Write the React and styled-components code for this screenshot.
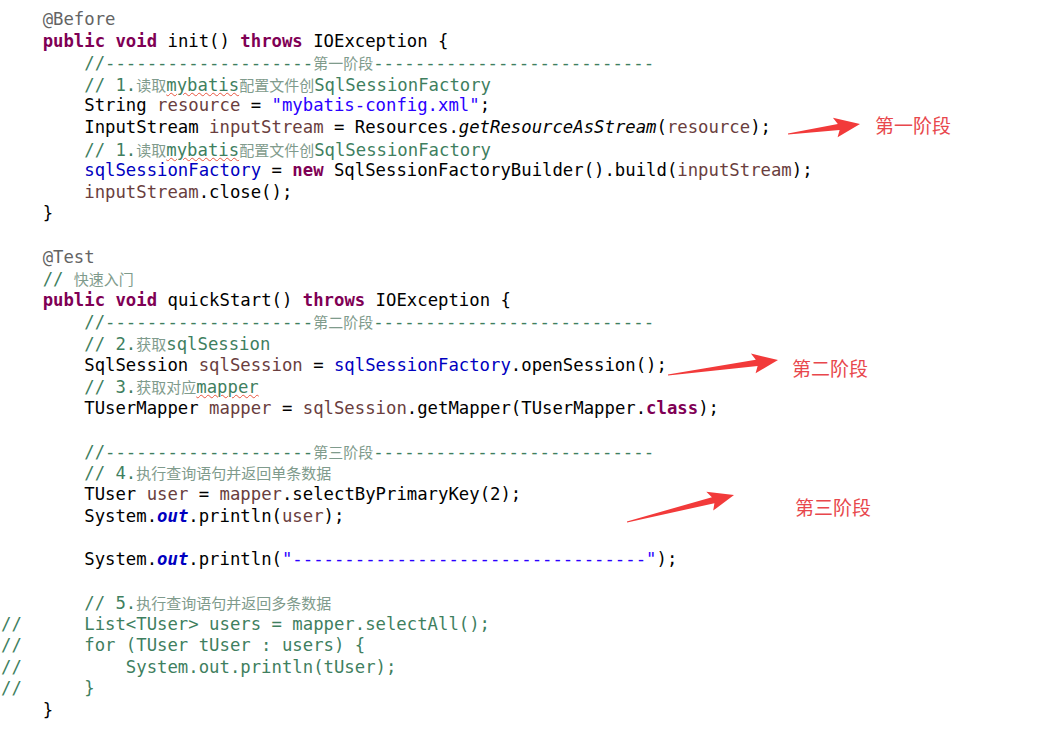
import React from "react";
import styled, { createGlobalStyle } from "styled-components";

const Global = createGlobalStyle`
  html, body { margin: 0; padding: 0; background: #ffffff; }
  body { width: 1044px; height: 738px; overflow: hidden; }
`;

const Page = styled.div`
  position: relative;
  width: 1044px;
  height: 738px;
  background: #fff;
`;

const Code = styled.div`
  display: flex;
  flex-direction: column;
  padding: 9px 0 0 1px;
  font-family: "DejaVu Sans Mono", "Liberation Mono", monospace;
  font-size: 17.3px;
  color: #000;
`;

const Line = styled.div`
  height: 21.6px;
  line-height: 21.6px;
  white-space: pre;
`;

const Kw = styled.span`
  color: #7f0055;
  font-weight: bold;
`;
const Str = styled.span`
  color: #2a00ff;
`;
const Field = styled.span`
  color: #0000c0;
  font-style: ${(p) => (p.$static ? "italic" : "normal")};
  font-weight: ${(p) => (p.$static ? "bold" : "normal")};
`;
const Var = styled.span`
  color: #6a3e3e;
`;
const Ann = styled.span`
  color: #646464;
`;
const Cm = styled.span`
  color: #3f7f5f;
`;
const Cjk = styled.span`
  font-family: "Noto Sans CJK SC", sans-serif;
  font-size: 15px;
  color: #7f9b8c;
`;
const Ital = styled.span`
  font-style: italic;
`;
const Squiggle = styled.span`
  text-decoration: underline wavy #e8553f;
  text-decoration-thickness: 1px;
  text-underline-offset: 1px;
`;

const Overlay = styled.svg`
  position: absolute;
  left: 0;
  top: 0;
  pointer-events: none;
`;

const Label = styled.span`
  position: absolute;
  left: ${(p) => p.$x}px;
  top: ${(p) => p.$y}px;
  font-family: "Noto Sans CJK SC", sans-serif;
  font-size: 19px;
  line-height: 24px;
  color: #e8474c;
  white-space: nowrap;
`;

const arrowPoints = (x1, y1, x2, y2) => {
  const dx = x2 - x1;
  const dy = y2 - y1;
  const L = Math.hypot(dx, dy);
  const ux = dx / L;
  const uy = dy / L;
  const nx = -uy;
  const ny = ux;
  const h = 25;
  const local = [
    [0, -0.6],
    [L - h + 3, -3.2],
    [L - h - 1, -10],
    [L, 0],
    [L - h + 1, 10],
    [L - h + 4, 3.2],
    [0, 0.6],
  ];
  return local
    .map(([a, b]) => `${(x1 + ux * a + nx * b).toFixed(1)},${(y1 + uy * a + ny * b).toFixed(1)}`)
    .join(" ");
};

const arrows = [
  [788, 134, 860, 124],
  [668, 375, 778, 360],
  [627, 522, 734, 495],
];

const D = (n) => "-".repeat(n);

export default function App() {
  return (
    <Page>
      <Global />
      <Code>
        <Line>    <Ann>@Before</Ann></Line>
        <Line>    <Kw>public</Kw> <Kw>void</Kw> init() <Kw>throws</Kw> IOException {"{"}</Line>
        <Line>        <Cm>//{D(20)}<Cjk>第一阶段</Cjk>{D(27)}</Cm></Line>
        <Line>        <Cm>// 1.<Cjk>读取</Cjk><Squiggle>mybatis</Squiggle><Cjk>配置文件创</Cjk>SqlSessionFactory</Cm></Line>
        <Line>        String <Var>resource</Var> = <Str>"mybatis-config.xml"</Str>;</Line>
        <Line>        InputStream <Var>inputStream</Var> = Resources.<Ital>getResourceAsStream</Ital>(<Var>resource</Var>);</Line>
        <Line>        <Cm>// 1.<Cjk>读取</Cjk><Squiggle>mybatis</Squiggle><Cjk>配置文件创</Cjk>SqlSessionFactory</Cm></Line>
        <Line>        <Field>sqlSessionFactory</Field> = <Kw>new</Kw> SqlSessionFactoryBuilder().build(<Var>inputStream</Var>);</Line>
        <Line>        <Var>inputStream</Var>.close();</Line>
        <Line>    {"}"}</Line>
        <Line> </Line>
        <Line>    <Ann>@Test</Ann></Line>
        <Line>    <Cm>// <Cjk>快速入门</Cjk></Cm></Line>
        <Line>    <Kw>public</Kw> <Kw>void</Kw> quickStart() <Kw>throws</Kw> IOException {"{"}</Line>
        <Line>        <Cm>//{D(20)}<Cjk>第二阶段</Cjk>{D(27)}</Cm></Line>
        <Line>        <Cm>// 2.<Cjk>获取</Cjk>sqlSession</Cm></Line>
        <Line>        SqlSession <Var>sqlSession</Var> = <Field>sqlSessionFactory</Field>.openSession();</Line>
        <Line>        <Cm>// 3.<Cjk>获取对应</Cjk><Squiggle>mapper</Squiggle></Cm></Line>
        <Line>        TUserMapper <Var>mapper</Var> = <Var>sqlSession</Var>.getMapper(TUserMapper.<Kw>class</Kw>);</Line>
        <Line> </Line>
        <Line>        <Cm>//{D(20)}<Cjk>第三阶段</Cjk>{D(27)}</Cm></Line>
        <Line>        <Cm>// 4.<Cjk>执行查询语句并返回单条数据</Cjk></Cm></Line>
        <Line>        TUser <Var>user</Var> = <Var>mapper</Var>.selectByPrimaryKey(2);</Line>
        <Line>        System.<Field $static>out</Field>.println(<Var>user</Var>);</Line>
        <Line> </Line>
        <Line>        System.<Field $static>out</Field>.println(<Str>"{D(34)}"</Str>);</Line>
        <Line> </Line>
        <Line>        <Cm>// 5.<Cjk>执行查询语句并返回多条数据</Cjk></Cm></Line>
        <Line><Cm>//      List&lt;TUser&gt; users = mapper.selectAll();</Cm></Line>
        <Line><Cm>//      for (TUser tUser : users) {"{"}</Cm></Line>
        <Line><Cm>//          System.out.println(tUser);</Cm></Line>
        <Line><Cm>//      {"}"}</Cm></Line>
        <Line>    {"}"}</Line>
      </Code>
      <Overlay width="1044" height="738" viewBox="0 0 1044 738">
        {arrows.map((a, i) => (
          <polygon key={i} points={arrowPoints(...a)} fill="#f23a3a" />
        ))}
      </Overlay>
      <Label $x={875} $y={113}>第一阶段</Label>
      <Label $x={792} $y={356}>第二阶段</Label>
      <Label $x={795} $y={495}>第三阶段</Label>
    </Page>
  );
}
